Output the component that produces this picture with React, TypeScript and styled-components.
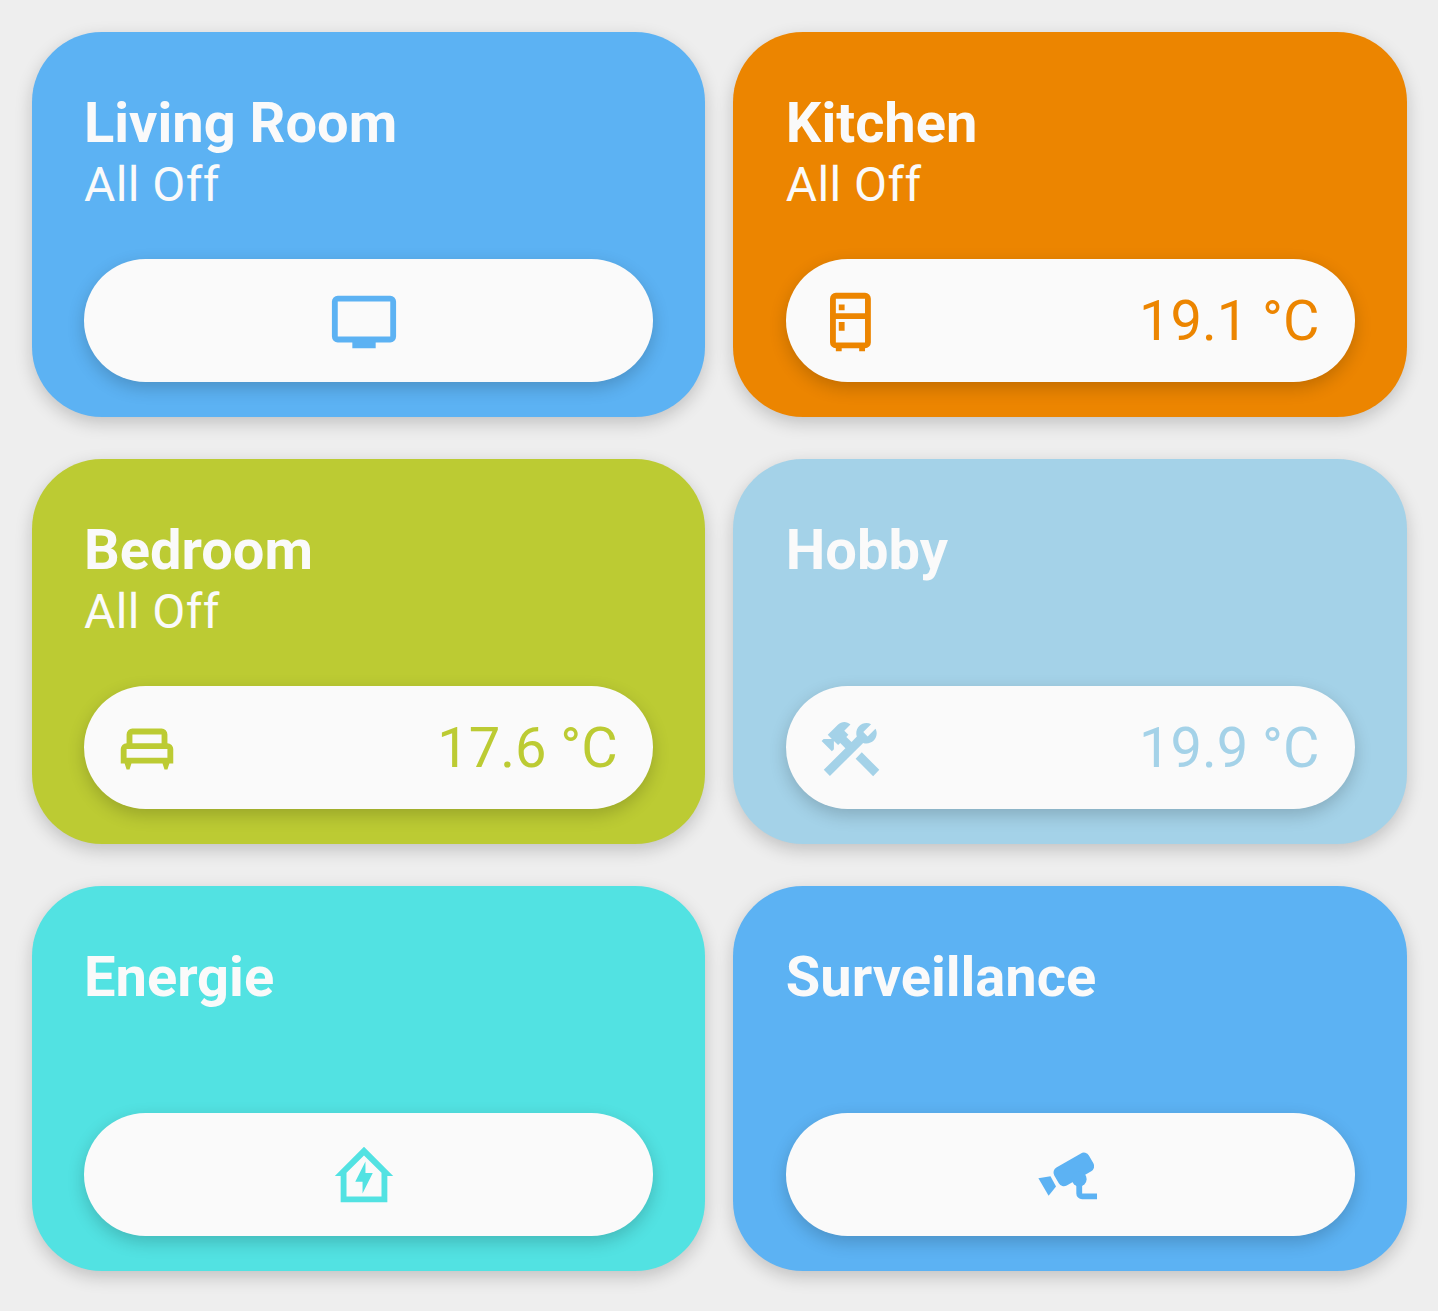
import React from "react";
import styled, { createGlobalStyle } from "styled-components";

const GlobalStyle = createGlobalStyle`
  body {
    margin: 0;
    background: #eeeeee;
    font-family: Roboto, "Liberation Sans", sans-serif;
  }
`;

const ELEVATION = "0 6px 17px rgba(0, 0, 0, 0.19)";

const Grid = styled.main`
  box-sizing: border-box;
  width: 1438px;
  height: 1311px;
  padding: 32px 31px 40px 32px;
  display: grid;
  grid-template-columns: 673.3px 673.7px;
  grid-auto-rows: 385px;
  gap: 42px 28px;
`;

const Card = styled.section<{ $color: string }>`
  box-sizing: border-box;
  display: flex;
  flex-direction: column;
  justify-content: space-between;
  padding: 58px 52px 35px;
  border-radius: 70px;
  background: ${(p) => p.$color};
  color: #fafafa;
  box-shadow: ${ELEVATION};

  &:nth-child(even) {
    padding-left: 52.5px;
  }
`;

const Title = styled.h2`
  margin: 0;
  font-size: 56px;
  line-height: 66px;
  font-weight: 700;
`;

const Subtitle = styled.p`
  margin: 0;
  font-size: 48px;
  line-height: 58px;
  font-weight: 400;
  letter-spacing: 0.42px;
`;

const Pill = styled.div<{ $color: string; $single: boolean; $inset: number }>`
  box-sizing: border-box;
  height: 123px;
  display: flex;
  align-items: center;
  justify-content: ${(p) => (p.$single ? "center" : "space-between")};
  padding: 0 ${(p) => (p.$single ? p.$inset : 35.6)}px 0 ${(p) => (p.$single ? 0 : p.$inset)}px;
  border-radius: 62px;
  background: #fafafa;
  color: ${(p) => p.$color};
  box-shadow: ${ELEVATION};
`;

const Icon = styled.svg`
  display: block;
  width: 70px;
  height: 70px;
  margin-top: 2px;
  fill: currentColor;
  fill-rule: evenodd;
`;

const Value = styled.span`
  font-size: 56px;
  line-height: 66px;
`;

const icons = {
  television: (
    <path d="M21,17H3V5H21M21,3H3A2,2 0 0,0 1,5V17A2,2 0 0,0 3,19H8V21H16V19H21A2,2 0 0,0 23,17V5A2,2 0 0,0 21,3Z" />
  ),
  fridge: (
    <path
      transform="translate(0.15 0)"
      d="M9,21V22H7V21A2,2 0 0,1 5,19V4A2,2 0 0,1 7,2H17A2,2 0 0,1 19,4V19A2,2 0 0,1 17,21V22H15V21H9M7,4V9H17V4H7M7,19H17V11H7V19M8,12H10V15H8V12M8,6H10V8H8V6Z"
    />
  ),
  bed: (
    <path d="M19,10V7A2,2 0 0,0 17,5H7A2,2 0 0,0 5,7V10A2,2 0 0,0 3,12V17H4.33L5,19H6L6.67,17H17.33L18,19H19L19.67,17H21V12A2,2 0 0,0 19,10M7,7H17V10H7V7M19,15H5V12H19V15Z" />
  ),
  tools: (
    <path
      transform="translate(0.15 0)"
      d="M13.78 15.3L19.78 21.3L21.89 19.14L15.89 13.14L13.78 15.3M17.5 10.1C17.11 10.1 16.69 10.05 16.36 9.91L4.97 21.25L2.86 19.14L10.27 11.74L8.5 9.96L7.78 10.66L6.33 9.25V12.11L5.63 12.81L2.11 9.25L2.81 8.55H5.62L4.22 7.14L7.78 3.58C8.95 2.41 10.83 2.41 12 3.58L9.89 5.74L11.3 7.14L10.59 7.85L12.38 9.63L14.2 7.75C14.06 7.42 14 7 14 6.63C14 4.66 15.56 3.11 17.5 3.11C18.09 3.11 18.61 3.25 19.08 3.53L16.41 6.2L17.91 7.7L20.58 5.03C20.86 5.5 21 6 21 6.63C21 8.55 19.45 10.1 17.5 10.1Z"
    />
  ),
  energy: (
    <path d="M12,2L2,12H4V21H20V12H22L12,2M18,19H6V10.9L12,5L18,10.9V19M12.5,7L9,14H11.5V18L15,11H12.5V7Z" />
  ),
  cctv: (
    <>
      <rect x="7.15" y="6.2" width="13.7" height="7.1" rx="2" transform="rotate(-30 14 9.75)" />
      <circle cx="15.85" cy="13" r="2.55" />
      <path d="M14.85,15V18A2,2 0 0,0 16.85,20H21.95V18H16.85V15Z" />
      <path d="M6,12.1L1.85,12.8L5.35,18.75L7.9,15.6Z" />
    </>
  ),
};

interface Room {
  name: string;
  color: string;
  icon: keyof typeof icons;
  inset: number;
  status?: string;
  value?: string;
}

const rooms: Room[] = [
  { name: "Living Room", color: "#5cb2f3", icon: "television", inset: 9, status: "All Off" },
  { name: "Kitchen", color: "#ec8500", icon: "fridge", inset: 28.8, status: "All Off", value: "19.1 °C" },
  { name: "Bedroom", color: "#bccb33", icon: "bed", inset: 28, status: "All Off", value: "17.6 °C" },
  { name: "Hobby", color: "#a4d2e8", icon: "tools", inset: 28.8, value: "19.9 °C" },
  { name: "Energie", color: "#52e2e2", icon: "energy", inset: 9 },
  { name: "Surveillance", color: "#5cb2f3", icon: "cctv", inset: 4.6 },
];

export default function App() {
  return (
    <>
      <GlobalStyle />
      <Grid>
        {rooms.map((room) => (
          <Card key={room.name} $color={room.color}>
            <header>
              <Title>{room.name}</Title>
              {room.status && <Subtitle>{room.status}</Subtitle>}
            </header>
            <Pill $color={room.color} $single={!room.value} $inset={room.inset}>
              <Icon viewBox="0 0 24 24" aria-hidden="true">
                {icons[room.icon]}
              </Icon>
              {room.value && <Value>{room.value}</Value>}
            </Pill>
          </Card>
        ))}
      </Grid>
    </>
  );
}
